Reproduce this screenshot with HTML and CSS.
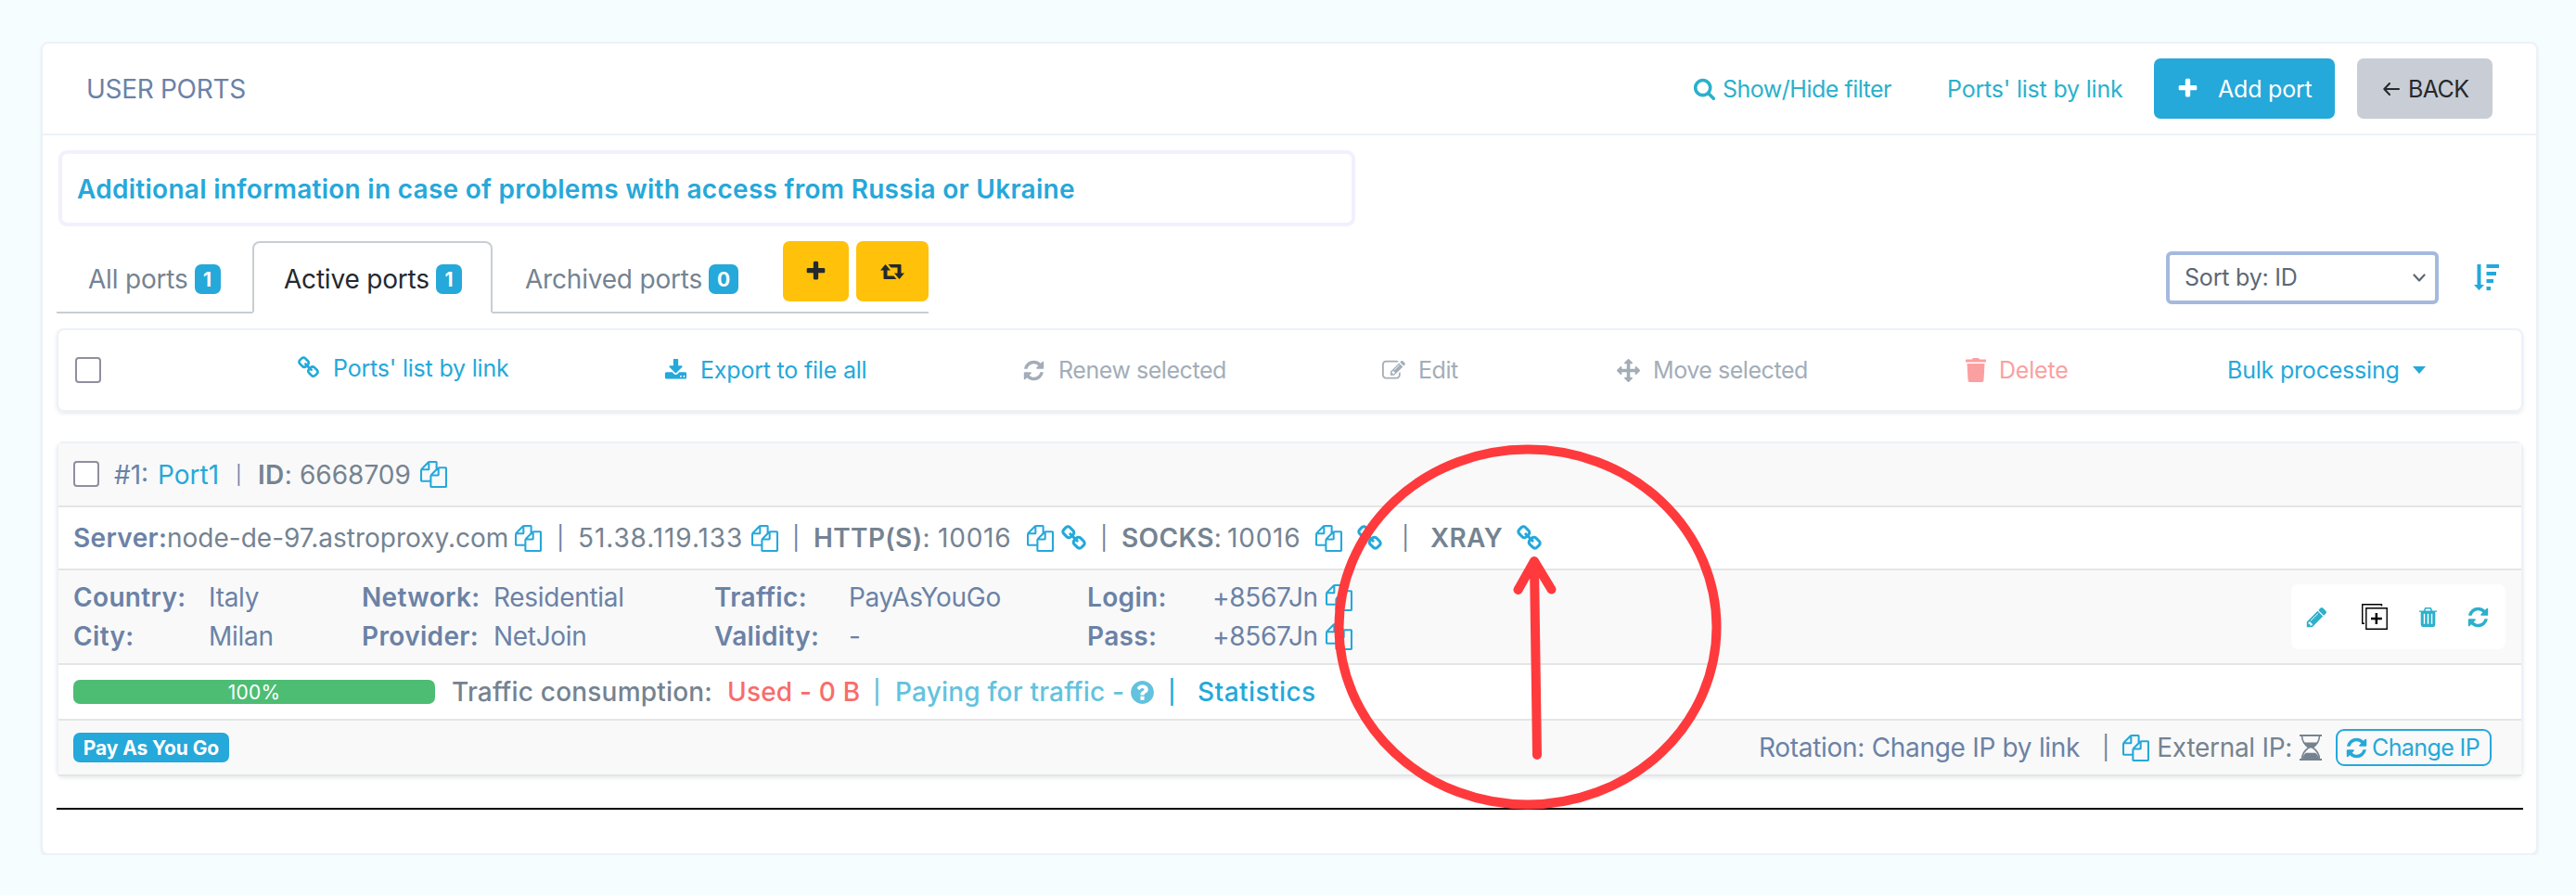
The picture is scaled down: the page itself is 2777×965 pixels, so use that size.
FILE: index.html
```html
<!DOCTYPE html>
<html lang="en">
  <head>
    <meta charset="UTF-8" />
    <meta name="viewport" content="width=device-width, initial-scale=1.0" />
    <title>User ports</title>
    <link rel="stylesheet" href="styles.css">
  </head>

  <body>
    <svg class="sprite" xmlns="http://www.w3.org/2000/svg">
      <symbol id="copy" viewBox="0 0 1792 1792"><path d="M1696 384q40 0 68 28t28 68v1216q0 40-28 68t-68 28h-960q-40 0-68-28t-28-68v-288h-544q-40 0-68-28t-28-68v-672q0-40 20-88t48-76l408-408q28-28 76-48t88-20h416q40 0 68 28t28 68v328q68-40 128-40h416zm-544 213l-299 299h299v-299zm-640-384l-299 299h299v-299zm196 647l316-316v-416h-384v416q0 40-28 68t-68 28h-416v640h512v-256q0-40 20-88t48-76zm956 804v-1152h-384v416q0 40-28 68t-68 28h-416v640h896z"/></symbol>
      <symbol id="refresh" viewBox="0 0 1792 1792"><path d="M1639 1056q0 5-1 7-64 268-268 434.5t-478 166.5q-146 0-282.5-55t-243.5-157l-129 129q-19 19-45 19t-45-19-19-45v-448q0-26 19-45t45-19h448q26 0 45 19t19 45-19 45l-137 137q71 66 161 102t187 36q134 0 250-65t186-179q11-17 53-117 8-23 30-23h192q13 0 22.5 9.5t9.5 22.5zm25-800v448q0 26-19 45t-45 19h-448q-26 0-45-19t-19-45 19-45l138-138q-148-137-349-137-134 0-250 65t-186 179q-11 17-53 117-8 23-30 23h-199q-13 0-22.5-9.5t-9.5-22.5v-7q65-268 270-434.5t480-166.5q146 0 284 55.5t245 156.5l130-129q19-19 45-19t45 19 19 45z"/></symbol>
      <symbol id="plus" viewBox="0 0 1792 1792"><path d="M1600 736v192q0 40-28 68t-68 28h-416v416q0 40-28 68t-68 28h-192q-40 0-68-28t-28-68v-416h-416q-40 0-68-28t-28-68v-192q0-40 28-68t68-28h416v-416q0-40 28-68t68-28h192q40 0 68 28t28 68v416h416q40 0 68 28t28 68z"/></symbol>
      <symbol id="search" viewBox="0 0 1792 1792"><path d="M1216 832q0-185-131.5-316.5t-316.5-131.5-316.5 131.5-131.5 316.5 131.5 316.5 316.5 131.5 316.5-131.5 131.5-316.5zm512 832q0 52-38 90t-90 38q-54 0-90-38l-343-342q-179 124-399 124-143 0-273.5-55.5t-225-150-150-225-55.5-273.5 55.5-273.5 150-225 225-150 273.5-55.5 273.5 55.5 225 150 150 225 55.5 273.5q0 220-124 399l343 343q37 37 37 90z"/></symbol>
      <symbol id="move" viewBox="0 0 1792 1792"><path d="M1792 896q0 26-19 45l-256 256q-19 19-45 19t-45-19-19-45v-128h-384v384h128q26 0 45 19t19 45-19 45l-256 256q-19 19-45 19t-45-19l-256-256q-19-19-19-45t19-45 45-19h128v-384h-384v128q0 26-19 45t-45 19-45-19l-256-256q-19-19-19-45t19-45l256-256q19-19 45-19t45 19 19 45v128h384v-384h-128q-26 0-45-19t-19-45 19-45l256-256q19-19 45-19t45 19l256 256q19 19 19 45t-19 45-45 19h-128v384h384v-128q0-26 19-45t45-19 45 19l256 256q19 19 19 45z"/></symbol>
      <symbol id="download" viewBox="0 0 1792 1792"><path d="M1344 1344q0-26-19-45t-45-19-45 19-19 45 19 45 45 19 45-19 19-45zm256 0q0-26-19-45t-45-19-45 19-19 45 19 45 45 19 45-19 19-45zm128-224v320q0 40-28 68t-68 28h-1472q-40 0-68-28t-28-68v-320q0-40 28-68t68-28h465l135 136q58 56 136 56t136-56l136-136h464q40 0 68 28t28 68zm-325-569q17 41-14 70l-448 448q-18 19-45 19t-45-19l-448-448q-31-29-14-70 17-39 59-39h256v-448q0-26 19-45t45-19h256q26 0 45 19t19 45v448h256q42 0 59 39z"/></symbol>
      <symbol id="pencil" viewBox="0 0 1792 1792"><path d="M491 1536l91-91-235-235-91 91v107h128v128h107zm523-928q0-22-22-22-10 0-17 7l-542 542q-7 7-7 17 0 22 22 22 10 0 17-7l542-542q7-7 7-17zm-54-192l416 416-832 832h-416v-416zm683 96q0 53-37 90l-166 166-416-416 166-165q36-38 90-38 53 0 91 38l235 234q37 39 37 91z"/></symbol>
      <symbol id="edit" viewBox="0 0 1792 1792"><path d="M888 1184l116-116-152-152-116 116v56h96v96h56zm440-720q-16-16-33 1l-350 350q-17 17-1 33t33-1l350-350q17-17 1-33zm80 594v190q0 119-84.5 203.5t-203.5 84.5h-832q-119 0-203.5-84.5t-84.5-203.5v-832q0-119 84.5-203.5t203.5-84.5h832q63 0 117 25 15 7 18 23 3 17-9 29l-49 49q-14 14-32 8-23-6-45-6h-832q-66 0-113 47t-47 113v832q0 66 47 113t113 47h832q66 0 113-47t47-113v-126q0-13 9-22l64-64q15-15 35-7t20 29zm-96-738l288 288-672 672h-288v-288zm444 132l-92 92-288-288 92-92q28-28 68-28t68 28l152 152q28 28 28 68t-28 68z"/></symbol>
      <symbol id="question" viewBox="0 0 1792 1792"><path d="M1024 1376v-192q0-14-9-23t-23-9h-192q-14 0-23 9t-9 23v192q0 14 9 23t23 9h192q14 0 23-9t9-23zm256-672q0-88-55.5-163t-138.5-116-170-41q-243 0-371 213-15 24 8 42l132 100q7 6 19 6 16 0 25-12 53-68 86-92 34-24 86-24 48 0 85.5 26t37.5 59q0 38-20 61t-68 45q-63 28-115.5 86.5t-52.5 125.5v36q0 14 9 23t23 9h192q14 0 23-9t9-23q0-19 21.5-49.5t54.5-49.5q32-18 49-28.5t46-35 44.5-48 28-60.5 12.5-81zm384 192q0 209-103 385.5t-279.5 279.5-385.5 103-385.5-103-279.5-279.5-103-385.5 103-385.5 279.5-279.5 385.5-103 385.5 103 279.5 279.5 103 385.5z"/></symbol>
      <symbol id="link" viewBox="0 0 1792 1792"><path d="M1520 1216q0-40-28-68l-208-208q-28-28-68-28-42 0-72 32 3 3 19 18.5t21.5 21.5 15 19 13 25.5 3.5 27.5q0 40-28 68t-68 28q-15 0-27.5-3.5t-25.5-13-19-15-21.5-21.5-18.5-19q-33 31-33 73 0 40 28 68l206 207q27 27 68 27 40 0 68-26l147-146q28-28 28-67zm-703-705q0-40-28-68l-206-207q-28-28-68-28-39 0-68 27l-147 146q-28 28-28 67 0 40 28 68l208 208q27 27 68 27 42 0 72-31-3-3-19-18.5t-21.5-21.5-15-19-13-25.5-3.5-27.5q0-40 28-68t68-28q15 0 27.5 3.5t25.5 13 19 15 21.5 21.5 18.5 19q33-31 33-73zm895 705q0 120-85 203l-147 146q-83 83-203 83-121 0-204-85l-206-207q-83-83-83-203 0-123 88-209l-88-88q-86 88-208 88-120 0-204-84l-208-208q-84-84-84-204t85-203l147-146q83-83 203-83 121 0 204 85l206 207q83 83 83 203 0 123-88 209l88 88q86-88 208-88 120 0 204 84l208 208q84 84 84 204z"/></symbol>
      <symbol id="retweet" viewBox="0 0 26 16"><path d="M5.500 0L11 6.500H7.500V12.500H14.500L17.500 16H4.500Q3.500 16 3.500 15V6.500H0ZM8.500 0H21.500Q22.500 0 22.500 1V9.500H26L20.500 16L15 9.500H18.500V3.500H11.500Z"/></symbol>
      <symbol id="bin" viewBox="0 0 22 26"><path d="M7 1.500Q7 0 8.500 0H13.500Q15 0 15 1.500H21Q22 1.500 22 2.500V4.500H0V2.500Q0 1.500 1 1.500ZM1.500 6H20.500L19.500 24Q19.400 26 17.500 26H4.500Q2.600 26 2.500 24Z"/></symbol>
      <symbol id="trash" viewBox="0 0 20 22"><path fill-rule="evenodd" d="M6.500 0H13.500L15 3.500H20V5H18.200V19Q18.200 22 15.500 22H4.500Q1.800 22 1.800 19V5H0V3.500H5ZM7.500 1.500L6.800 3.500H13.200L12.500 1.500ZM5 7V18.500H6.500V7ZM9.200 7V18.500H10.800V7ZM13.500 7V18.500H15V7Z"/></symbol>
      <symbol id="duplicate" viewBox="0 0 28 28"><path fill="none" stroke="currentColor" stroke-width="1.400" d="M21.500 2.500V.7H.7V21.300H3M4.800 4.700H27.200V27.200H4.800Z"/><path d="M14.600 10H17V14.700H21.800V17.200H17V22H14.600V17.200H10V14.700H14.600Z"/></symbol>
      <symbol id="hourglass" viewBox="0 0 24 28"><path d="M0 0H24V2H0ZM0 26H24V28H0Z"/><path fill="none" stroke="currentColor" stroke-width="1.600" d="M2.500 1Q2.500 9 10 14Q2.500 19 2.500 27M21.500 1Q21.500 9 14 14Q21.500 19 21.500 27"/><path d="M4 8.500H20Q18 12.500 14.500 14.500H9.500Q6 12.500 4 8.500ZM3 26Q4 21.500 7 19.800H17Q20 21.500 21 26Z"/></symbol>
      <symbol id="sort" viewBox="0 0 27 28"><path d="M3.500 0H7.500V22H11L5.500 28L0 22H3.500ZM13.500 0H27V4H13.500ZM13.500 8H24V12H13.500ZM13.500 16H21V20H13.500ZM13.500 24H18V28H13.500Z"/></symbol>
      <symbol id="arrow" viewBox="0 0 18 14"><path fill="none" stroke="currentColor" stroke-width="2" stroke-linecap="round" stroke-linejoin="round" d="M17 7H1.500M7 1L1.300 7L7 13"/></symbol>
      <symbol id="chevron" viewBox="0 0 14 9"><path fill="none" stroke="currentColor" stroke-width="2.200" stroke-linecap="round" stroke-linejoin="round" d="M1.500 1.500L7 7.500L12.500 1.500"/></symbol>
    </svg>

    <div class="panel">
      <div class="panel-header">
        <span class="panel-title">USER PORTS</span>
        <a class="head-link filter-link"><svg class="icon i25"><use href="#search"/></svg><span>Show/Hide filter</span></a>
        <a class="head-link list-link">Ports' list by link</a>
        <a class="btn btn-add"><svg class="icon i25"><use href="#plus"/></svg><span>Add port</span></a>
        <a class="btn btn-back"><svg class="icon arrow"><use href="#arrow"/></svg><span>BACK</span></a>
      </div>

      <div class="panel-body">
        <div class="notice">Additional information in case of problems with access from Russia or Ukraine</div>

        <div class="controls">
          <div class="tabs">
            <a class="tab tab-all">All ports<span class="count">1</span></a>
            <a class="tab tab-active">Active ports<span class="count">1</span></a>
            <a class="tab tab-archived">Archived ports<span class="count">0</span></a>
            <a class="btn-warn btn-plus"><svg class="icon i25"><use href="#plus"/></svg></a>
            <a class="btn-warn btn-retweet"><svg class="icon retweet"><use href="#retweet"/></svg></a>
          </div>
          <div class="sorting">
            <div class="select"><span>Sort by: ID</span><svg class="icon chevron"><use href="#chevron"/></svg></div>
            <svg class="icon sort"><use href="#sort"/></svg>
          </div>
        </div>

        <div class="card toolbar">
          <span class="check"></span>
          <a class="tool raised"><svg class="icon i25"><use href="#link"/></svg><span>Ports' list by link</span></a>
          <a class="tool"><svg class="icon i25"><use href="#download"/></svg><span>Export to file all</span></a>
          <a class="tool muted"><svg class="icon i25"><use href="#refresh"/></svg><span>Renew selected</span></a>
          <a class="tool muted"><svg class="icon i25"><use href="#edit"/></svg><span>Edit</span></a>
          <a class="tool muted"><svg class="icon i25"><use href="#move"/></svg><span>Move selected</span></a>
          <a class="tool danger"><svg class="icon bin"><use href="#bin"/></svg><span>Delete</span></a>
          <a class="tool bulk"><span>Bulk processing</span><i class="caret"></i></a>
        </div>

        <div class="card port">
          <div class="row row-title">
            <span class="check"></span>
            <span>#1:</span>
            <a>Port1</a>
            <span class="small-bar">|</span>
            <span class="gray"><b>ID</b>:</span>
            <span class="gray">6668709</span>
            <svg class="icon i28"><use href="#copy"/></svg>
          </div>

          <div class="row row-server">
            <b>Server:</b>
            <span class="gray host">node-de-97.astroproxy.com</span>
            <svg class="icon i28"><use href="#copy"/></svg>
            <span class="bar">|</span>
            <span class="gray ip">51.38.119.133</span>
            <svg class="icon i28"><use href="#copy"/></svg>
            <span class="bar">|</span>
            <span class="gray"><b>HTTP(S)</b>:</span>
            <span class="gray num">10016</span>
            <svg class="icon i28"><use href="#copy"/></svg>
            <svg class="icon i28"><use href="#link"/></svg>
            <span class="gray bar">|</span>
            <span class="gray"><b>SOCKS</b>:</span>
            <span class="gray num">10016</span>
            <svg class="icon i28"><use href="#copy"/></svg>
            <svg class="icon i28"><use href="#link"/></svg>
            <span class="gray bar">|</span>
            <b class="gray">XRAY</b>
            <svg class="icon i28"><use href="#link"/></svg>
          </div>

          <div class="row row-details">
            <div class="details">
              <b>Country:</b><span>Italy</span>
              <b>Network:</b><span>Residential</span>
              <b>Traffic:</b><span>PayAsYouGo</span>
              <b>Login:</b><span>+8567Jn</span>
              <svg class="icon i28"><use href="#copy"/></svg>
              <b>City:</b><span>Milan</span>
              <b>Provider:</b><span>NetJoin</span>
              <b>Validity:</b><span>-</span>
              <b>Pass:</b><span>+8567Jn</span>
              <svg class="icon i28"><use href="#copy"/></svg>
            </div>
            <div class="actions">
              <svg class="icon i25"><use href="#pencil"/></svg>
              <svg class="icon duplicate"><use href="#duplicate"/></svg>
              <svg class="icon trash"><use href="#trash"/></svg>
              <svg class="icon i25"><use href="#refresh"/></svg>
            </div>
          </div>

          <div class="row row-traffic">
            <div class="progress"><div class="progress-bar" style="width: 100%">100%</div></div>
            <span class="gray">Traffic consumption:</span>
            <span class="used">Used - 0 B</span>
            <span class="paying bar">|</span>
            <span class="paying">Paying for traffic -</span>
            <svg class="icon i28 help"><use href="#question"/></svg>
            <a class="bar">|</a>
            <a class="stats">Statistics</a>
          </div>

          <div class="row row-footer">
            <span class="plan">Pay As You Go</span>
            <span class="rotation">Rotation: Change IP by link</span>
            <span class="gray bar">|</span>
            <svg class="icon i28"><use href="#copy"/></svg>
            <span class="gray external">External IP:</span>
            <svg class="icon hourglass"><use href="#hourglass"/></svg>
            <a class="btn-change"><svg class="icon i25"><use href="#refresh"/></svg><span>Change IP</span></a>
          </div>
        </div>

        <hr />
      </div>

      <svg class="marker" viewBox="0 0 424 400">
        <ellipse cx="212" cy="200" rx="203.500" ry="191.500"/>
        <path d="M219 133L222 338M201.500 160L219 129L237.500 159.500"/>
      </svg>
    </div>
  </body>
</html>
```
FILE: styles.css
```css
* {
  box-sizing: border-box;
}

body {
  margin: 0;
  background: #f5fdff;
  color: #6b82a6;
  font-family: Inter, "Liberation Sans", sans-serif;
  font-size: 28px;
  line-height: 42px;
  white-space: nowrap;
}

a {
  color: #25a8da;
}

b {
  font-weight: 600;
  letter-spacing: 0.35px;
}

.sprite {
  display: none;
}

.icon {
  display: block;
  flex: none;
  fill: currentColor;
  color: #25a8da;
}

.i25 {
  width: 25px;
  height: 25px;
}

.i28 {
  width: 29px;
  height: 29px;
}

.gray {
  color: #758391;
}

.bar {
  font-size: 25px;
}

.panel {
  position: relative;
  width: 2692px;
  height: 877px;
  margin: 45px 0 0 44px;
  background: #fff;
  border: 2px solid #edf1f8;
  border-radius: 8px;
  box-shadow: 0 2px 3px rgba(60, 70, 110, 0.08);
}

/* header */
.panel-header {
  display: flex;
  align-items: center;
  height: 99px;
  padding: 0 47px 0 47px;
  border-bottom: 2px solid #edf1f8;
}

.panel-title {
  margin-right: auto;
  letter-spacing: -0.3px;
}

.head-link,
.tool,
.btn,
.btn-change,
.select {
  font-size: 25px;
  letter-spacing: -0.2px;
}

.head-link {
  color: #2cb0cb;
}

.head-link .icon {
  color: inherit;
}

.filter-link {
  display: flex;
  align-items: center;
  width: 274px;
  gap: 7px;
  letter-spacing: -0.5px;
}

.list-link {
  width: 223px;
}

.btn {
  display: flex;
  align-items: center;
  height: 65px;
  border-radius: 7px;
}

.btn-add {
  width: 195px;
  padding-left: 24px;
  gap: 20px;
  margin-right: 24px;
  background: #25a8da;
  color: #fff;
}

.btn-back {
  width: 146px;
  padding-left: 28px;
  gap: 9px;
  background: #c9cdd5;
  color: #24292e;
  letter-spacing: -0.6px;
}

.btn .icon {
  color: inherit;
}

.arrow {
  width: 18px;
  height: 14px;
}

.panel-body {
  padding: 16px 14px 0 15px;
}

.notice {
  width: 1398px;
  height: 82px;
  margin-left: 2px;
  padding: 17px 16px;
  border: 4px solid #f0f0ff;
  border-radius: 9px;
  color: #25a8da;
  font-weight: 600;
  letter-spacing: 0.28px;
}

/* tabs and sorting */
.controls {
  display: flex;
  justify-content: space-between;
  height: 78px;
  margin: 16px 0;
}

.tabs {
  display: flex;
  width: 940px;
  border-bottom: 2px solid #c8ced3;
}

.tab {
  display: flex;
  align-items: center;
  height: 78px;
  padding-top: 4px;
  color: #758391;
  letter-spacing: -0.2px;
}

.tab-all {
  width: 211px;
  padding-left: 34px;
}

.tab-active {
  width: 259px;
  padding-left: 32px;
  border: 2px solid #c8ced3;
  border-bottom-color: #fff;
  border-radius: 8px 8px 0 0;
  color: #24292e;
}

.tab-archived {
  width: 313px;
  padding-left: 35px;
}

.count {
  width: 28px;
  height: 32px;
  margin-left: 7px;
  border-radius: 7px;
  background: #25a8da;
  color: #fff;
  font-size: 21px;
  font-weight: 700;
  line-height: 33px;
  text-align: center;
}

.tab-archived .count {
  width: 32px;
}

.btn-warn {
  display: flex;
  align-items: center;
  justify-content: center;
  height: 65px;
  border-radius: 7px;
  background: #ffc10a;
}

.btn-warn .icon {
  color: #24292e;
}

.btn-plus {
  width: 71px;
  margin-right: 8px;
}

.btn-retweet {
  width: 78px;
}

.retweet {
  width: 26px;
  height: 16px;
}

.sorting {
  display: flex;
  align-items: center;
  gap: 38px;
  padding: 0 26px 0 0;
}

.select {
  display: flex;
  align-items: center;
  justify-content: space-between;
  width: 294px;
  height: 57px;
  padding: 0 10px 0 16px;
  border: 4px solid #a5b9dd;
  border-radius: 6px;
  color: #5c6873;
}

.chevron {
  width: 14px;
  height: 9px;
  color: #5c6873;
}

.sort {
  width: 27px;
  height: 28px;
}

/* cards */
.card {
  border: 2px solid #edf1f8;
  border-radius: 8px;
  box-shadow: 0 2px 4px rgba(60, 70, 110, 0.12);
}

.check {
  width: 28px;
  height: 28px;
  border: 2px solid #918e9e;
  border-radius: 4px;
  background: #fff;
}

.toolbar {
  display: grid;
  grid-template-columns: 239px 396px 386px 388px 253px 376px 282px auto;
  align-items: center;
  height: 90px;
  padding-left: 18px;
}

.tool {
  display: flex;
  align-items: center;
  gap: 14px;
}

.tool .icon {
  color: inherit;
}

.raised {
  margin-top: -5px;
}

.muted {
  color: #a3adb8;
  letter-spacing: -0.45px;
}

.danger {
  color: #fba0a0;
}

.bin {
  width: 22px;
  height: 26px;
}

.caret {
  border: 7px solid transparent;
  border-top: 8px solid #25a8da;
  border-bottom: 0;
}

.port {
  height: 361px;
  margin-top: 32px;
}

.row {
  display: grid;
  align-items: center;
  padding-left: 16px;
  border-bottom: 2px solid #e4e5e6;
}

.row:nth-child(odd) {
  background: #f9f9f9;
}

.row-title {
  grid-template-columns: 44px 47px 84px 24px 45px 130px 30px;
  height: 69px;
}

.row-title .check {
  margin-bottom: 2px;
}

.small-bar {
  font-size: 20px;
}

.row-server {
  grid-template-columns: 101px 375px 45px 23px 187px 44px 23px 134px 96px 36px 43px 23px 114px 95px 44px 49px 31px 92px 30px;
  height: 68px;
}

.ip {
  letter-spacing: 0.9px;
}

.num {
  letter-spacing: 0.8px;
}

.row-details {
  display: flex;
  justify-content: space-between;
  height: 102px;
  padding-right: 17px;
}

.details {
  display: grid;
  grid-template-columns: 146px 165px 142px 238px 145px 257px 135px 122px 30px;
  align-items: center;
  letter-spacing: -0.3px;
}

.actions {
  display: grid;
  grid-template-columns: 61px 62px 51px 25px;
  align-items: center;
  width: 231px;
  height: 70px;
  padding-left: 15px;
  border-radius: 8px;
  background: #fff;
}

.actions .icon {
  color: #2cb0cb;
}

.actions .duplicate {
  width: 28px;
  height: 28px;
  color: #000;
}

.trash {
  width: 19px;
  height: 21px;
}

.row-traffic {
  grid-template-columns: 408px 297px 157px 24px 252px 42px 32px 130px;
  height: 60px;
  font-weight: 500;
  letter-spacing: 0.2px;
}

.progress {
  width: 390px;
  height: 26px;
  border-radius: 7px;
  overflow: hidden;
}

.progress-bar {
  height: 100%;
  background: #4dbd74;
  color: #fff;
  font-size: 21px;
  font-weight: 400;
  line-height: 28px;
  text-align: center;
}

.used {
  color: #f86c6b;
}

.paying {
  color: #63c2de;
}

.help {
  color: #63c2de;
}

.stats {
  letter-spacing: 0.45px;
}

.row-footer {
  display: flex;
  height: 60px;
}

.plan {
  width: 168px;
  height: 32px;
  border-radius: 7px;
  background: #25a8da;
  color: #fff;
  font-size: 21px;
  font-weight: 700;
  letter-spacing: -0.1px;
  line-height: 33px;
  text-align: center;
}

.rotation {
  width: 370px;
  margin-left: auto;
  letter-spacing: -0.3px;
}

.row-footer .i28 {
  margin: 0 8px 0 14px;
}

.external {
  letter-spacing: -0.3px;
}

.hourglass {
  width: 24px;
  height: 28px;
  margin: 0 15px 0 8px;
  color: #758391;
}

.btn-change {
  display: flex;
  align-items: center;
  width: 168px;
  height: 40px;
  margin-right: 32px;
  padding-left: 8px;
  gap: 4px;
  border: 2px solid #25a8da;
  border-radius: 9px;
  letter-spacing: -0.6px;
}

hr {
  height: 2px;
  margin: 34px 0 0;
  border: 0;
  background: #000;
}

/* hand-drawn highlight over the table */
.marker {
  position: absolute;
  left: 1389px;
  top: 429px;
  width: 424px;
  height: 400px;
  fill: none;
  stroke: #ff3a3d;
  stroke-width: 10;
  stroke-linecap: round;
  stroke-linejoin: round;
}
```
